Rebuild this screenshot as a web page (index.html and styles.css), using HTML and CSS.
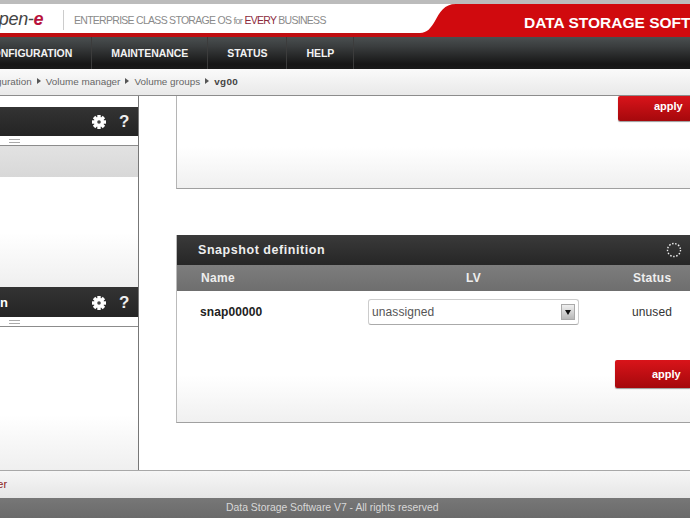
FILE: index.html
```html
<!DOCTYPE html>
<html lang="en">
<head>
<meta charset="utf-8">
<title>Open-E</title>
<link rel="stylesheet" href="styles.css">
</head>
<body>
<div class="page">
  <header class="top">
    <div class="brand">
      <div class="logo">open-<em>e</em></div>
      <div class="tagline">ENTERPRISE CLASS STORAGE OS <small>for</small> <b>EVERY</b> BUSINESS</div>
      <div class="banner">
        <svg class="curve" width="50" height="33" viewBox="0 0 50 33"><path d="M50 0H36C24 0 20 8 15 17C11 24 7 29 0 29V33H50Z" fill="#d00a0e"/></svg>
        <div class="banner-text">DATA STORAGE SOFTWARE</div>
      </div>
    </div>
  </header>
  <nav class="nav">
    <a class="nav-item">CONFIGURATION</a>
    <a class="nav-item">MAINTENANCE</a>
    <a class="nav-item">STATUS</a>
    <a class="nav-item">HELP</a>
  </nav>
  <div class="crumbs">
    <span>Configuration</span><i class="arr"></i><span>Volume manager</span><i class="arr"></i><span>Volume groups</span><i class="arr"></i><b>vg00</b>
  </div>
  <main class="main">
    <aside class="side">
      <section class="side-panel one">
        <div class="side-head">
          <svg class="gear" viewBox="0 0 14 14" width="14" height="14"><g fill="#fff"><rect x="5.300" y="0" width="3.400" height="14"/><rect x="5.300" y="0" width="3.400" height="14" transform="rotate(45 7 7)"/><rect x="5.300" y="0" width="3.400" height="14" transform="rotate(90 7 7)"/><rect x="5.300" y="0" width="3.400" height="14" transform="rotate(135 7 7)"/><circle cx="7" cy="7" r="5"/></g><circle cx="7" cy="7" r="1.800" fill="#444"/></svg>
          <span class="q">?</span>
        </div>
        <div class="split"><i></i></div>
        <div class="selected"></div>
      </section>
      <section class="side-panel two">
        <div class="side-head">
          <span class="head-n">n</span>
          <svg class="gear" viewBox="0 0 14 14" width="14" height="14"><g fill="#fff"><rect x="5.300" y="0" width="3.400" height="14"/><rect x="5.300" y="0" width="3.400" height="14" transform="rotate(45 7 7)"/><rect x="5.300" y="0" width="3.400" height="14" transform="rotate(90 7 7)"/><rect x="5.300" y="0" width="3.400" height="14" transform="rotate(135 7 7)"/><circle cx="7" cy="7" r="5"/></g><circle cx="7" cy="7" r="1.800" fill="#444"/></svg>
          <span class="q">?</span>
        </div>
        <div class="split"><i></i></div>
      </section>
    </aside>
    <div class="content">
      <section class="upper">
        <button class="apply up">apply</button>
      </section>
      <section class="snap">
        <div class="snap-head">
          <span>Snapshot definition</span>
          <svg class="spin" width="16" height="16" viewBox="0 0 16 16" fill="none" stroke="#eee" stroke-width="1.400" stroke-dasharray="1.500 1.600"><circle cx="8" cy="8" r="6.500"/></svg>
        </div>
        <div class="grid cols">
          <span class="c-name">Name</span><span class="c-lv">LV</span><span class="c-status">Status</span>
        </div>
        <div class="grid row">
          <b class="c-name">snap00000</b>
          <div class="select"><span>unassigned</span><i class="drop"></i></div>
          <span class="c-status">unused</span>
        </div>
        <div class="snap-foot"><button class="apply">apply</button></div>
      </section>
    </div>
  </main>
  <div class="status"><span>Logout user</span></div>
  <footer class="foot">Data Storage Software V7 - All rights reserved</footer>
</div>
</body>
</html>
```
FILE: styles.css
```css
* { box-sizing: border-box; }
html, body { margin: 0; padding: 0; }
body { width: 690px; height: 518px; overflow: hidden; background: #fff; font-family: "Liberation Sans", Arial, sans-serif; }
.page { width: 690px; height: 518px; overflow: hidden; display: flex; flex-direction: column; }

.top { height: 37px; flex: none; background: #fff; border-top: 4px solid #bcbcbc; }
.brand { height: 33px; display: flex; align-items: stretch; border-bottom: 4px solid #c00d10; }
.logo { margin-left: -11px; width: 75px; padding-top: 2px; font: italic 400 18px/26px "Liberation Sans", sans-serif; color: #444; flex: none; letter-spacing: -.3px; }
.logo em { color: #b8123c; font-weight: 700; }
.tagline { flex: none; width: 362px; height: 20px; margin-top: 6px; margin-left: -1px; padding-left: 10px; border-left: 1px solid #ccc; font-size: 10.500px; line-height: 20px; color: #8a8a8a; white-space: nowrap; letter-spacing: -.72px; }
.tagline small { font-size: 9.500px; }
.tagline b { font-weight: 400; color: #8c2a3c; }
.banner { flex: 1; display: flex; margin-bottom: -4px; min-width: 0; }
.curve { flex: none; display: block; margin-left: -5px; }
.banner-text { flex: 1; min-width: 0; height: 33px; overflow: hidden; white-space: nowrap; background: #d00a0e; color: #fff; font-weight: 700; font-size: 15.500px; line-height: 37px; padding-left: 54px; }

.nav { height: 32px; flex: none; display: flex; background: linear-gradient(#4a4f50, #3a3d3e 30%, #161616 85%, #1a1a1a); margin-left: -34px; }
.nav-item { flex: none; height: 32px; padding: 0 19px; border-right: 1px solid #3c3c3c; color: #f2f2f2; font-size: 10.500px; font-weight: 700; line-height: 33px; white-space: nowrap; letter-spacing: -.05px; }

.crumbs { height: 26px; flex: none; margin-left: -27px; display: flex; align-items: center; gap: 4px; background: linear-gradient(#fafafa, #e9e9e9); color: #666; font-size: 9.900px; padding-bottom: 2px; white-space: nowrap; }
.crumbs b { color: #444; letter-spacing: .3px; }
.arr { width: 0; height: 0; border-left: 4px solid #555; border-top: 3.500px solid transparent; border-bottom: 3.500px solid transparent; margin: 0 1px; }

.main { height: 376px; flex: none; display: flex; border-top: 1px solid #8c8c8c; border-bottom: 1px solid #a8a8a8; }
.side { width: 139px; flex: none; border-right: 1px solid #777; display: flex; flex-direction: column; padding-top: 11px; }
.side-panel { display: flex; flex-direction: column; background: linear-gradient(#fff 70%, #efefef); }
.side-panel.one { height: 180px; }
.side-panel.two { flex: 1; }
.side-head { height: 29px; flex: none; display: flex; align-items: center; justify-content: flex-end; gap: 13px; padding-right: 8px; background: linear-gradient(#333, #242424); color: #fff; }
.side-panel.two .side-head { height: 30px; }
.head-n { margin-right: auto; font-size: 13px; font-weight: 700; }
.gear { margin-top: 1px; }
.q { width: 11px; font-size: 17px; font-weight: 700; color: #eee; line-height: 1; }
.split { height: 10px; flex: none; background: #fff; border-bottom: 1px solid #8c8c8c; display: flex; align-items: center; padding-left: 9px; }
.split i { width: 11px; height: 4px; border-top: 1px solid #aaa; border-bottom: 1px solid #aaa; }
.selected { height: 31px; flex: none; background: linear-gradient(#e2e2e2, #d8d8d8); }

.content { flex: 1; min-width: 0; padding-left: 37px; display: flex; flex-direction: column; }
.upper { height: 93px; flex: none; border-left: 1px solid #b5b5b5; border-bottom: 1px solid #a0a0a0; background: linear-gradient(#fff 55%, #f0f0f0); display: flex; justify-content: flex-end; align-items: flex-start; }
.apply { width: 75px; height: 28px; padding: 0 0 1px 37px; border: 0; border-radius: 2px 0 0 2px; background: linear-gradient(#d9141a, #a5080c); color: #fff; font: 700 11px "Liberation Sans", sans-serif; text-align: left; box-shadow: 0 1px 1px #999; }
.apply.up { width: 72px; height: 25px; padding: 0 0 6px 36px; }

.snap { height: 188px; flex: none; margin-top: 46px; border-left: 1px solid #bbb; border-bottom: 1px solid #a0a0a0; background: linear-gradient(#fff 75%, #f0f0f0); display: flex; flex-direction: column; }
.snap-head { height: 30px; flex: none; display: flex; align-items: center; justify-content: space-between; padding: 0 8px 0 21px; background: linear-gradient(#3a3a3a, #262626); color: #eee; font-size: 12.500px; font-weight: 700; letter-spacing: .55px; }
.grid { display: grid; grid-template-columns: 191px 211px 1fr; align-items: center; }
.cols { height: 26px; flex: none; background: linear-gradient(#7d7d7d, #6e6e6e); color: #eee; font-size: 12px; font-weight: 700; letter-spacing: .3px; }
.c-name { padding-left: 24px; }
.c-lv { text-align: center; }
.c-status { padding-left: 54px; }
.row { height: 41px; flex: none; color: #333; font-size: 12px; letter-spacing: .1px; }
.row .c-name { color: #222; padding-left: 23px; }
.row .c-status { padding-left: 53px; }
.select { height: 26px; display: flex; align-items: center; justify-content: space-between; margin-top: 1px; padding: 0 3px 0 3px; background: #fff; border: 1px solid #ccc; border-bottom-color: #aaa; border-radius: 3px; color: #555; }
.drop { width: 14px; height: 16px; background: linear-gradient(#f0f0f0, #b8b8b8); border: 1px solid #aaa; display: flex; align-items: center; justify-content: center; }
.drop::after { content: ""; border-top: 5px solid #111; border-left: 3px solid transparent; border-right: 3px solid transparent; }
.snap-foot { display: flex; justify-content: flex-end; padding-top: 28px; }

.status { height: 27px; flex: none; margin-left: -51px; background: linear-gradient(#f6f6f6, #e6e6e6); font-size: 11px; line-height: 26px; color: #8c1c1c; }
.foot { height: 20px; flex: none; background: linear-gradient(#777, #6a6a6a); color: #d8d8d8; font-size: 10.400px; line-height: 20px; padding-left: 226px; white-space: nowrap; }
```
